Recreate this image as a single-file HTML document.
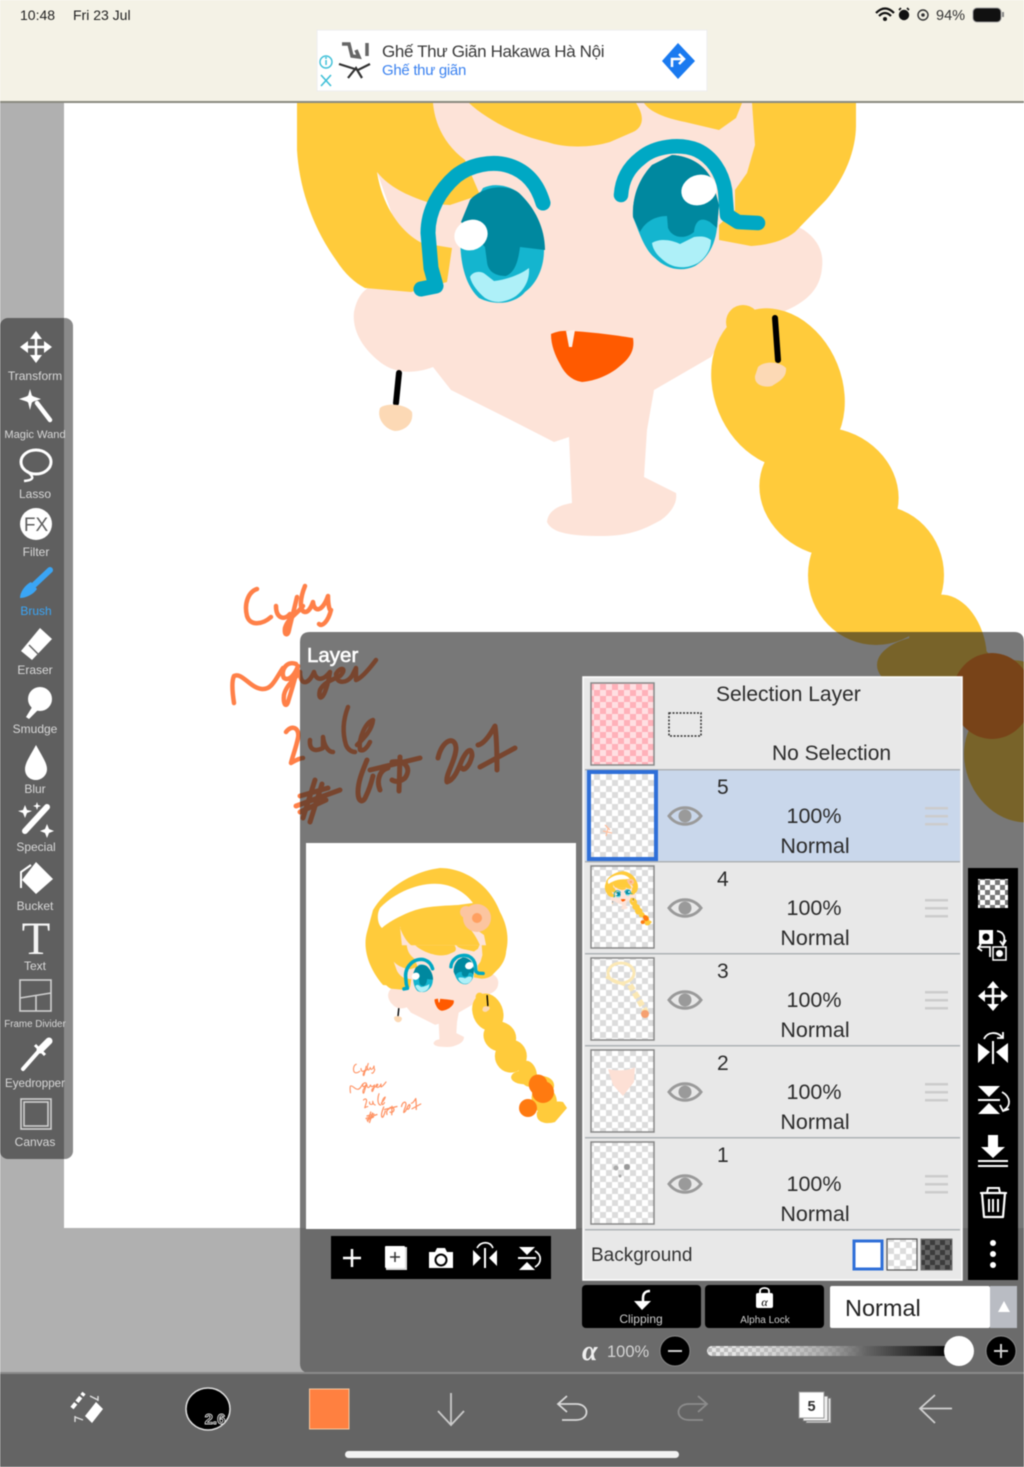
<!DOCTYPE html>
<html><head><meta charset="utf-8"><style>
html,body{margin:0;padding:0;background:#fff;width:1024px;height:1467px;overflow:hidden}
svg{display:block;filter:blur(.5px)}
text{font-family:"Liberation Sans","Noto Sans CJK SC",sans-serif}
.tl{font-size:12px;fill:#d8d8d8;text-anchor:middle}
.ln{font-size:21px;fill:#2c2c2c}
.lc{font-size:21.5px;fill:#2c2c2c;text-anchor:middle}
</style></head><body>
<svg width="1024" height="1467" viewBox="0 0 1024 1467" xmlns="http://www.w3.org/2000/svg">
<defs>
<pattern id="ck" width="12" height="12" patternUnits="userSpaceOnUse"><rect width="12" height="12" fill="#fff"/><rect width="6" height="6" fill="#dcdcdc"/><rect x="6" y="6" width="6" height="6" fill="#dcdcdc"/></pattern>
<pattern id="ckp" width="12" height="12" patternUnits="userSpaceOnUse"><rect width="12" height="12" fill="#ffdfe2"/><rect width="6" height="6" fill="#ffb1b9"/><rect x="6" y="6" width="6" height="6" fill="#ffb1b9"/></pattern>
<pattern id="ckd" width="10" height="10" patternUnits="userSpaceOnUse"><rect width="10" height="10" fill="#666"/><rect width="5" height="5" fill="#3c3c3c"/><rect x="5" y="5" width="5" height="5" fill="#3c3c3c"/></pattern>
<pattern id="ckw" width="10" height="10" patternUnits="userSpaceOnUse"><rect width="10" height="10" fill="#777"/><rect width="5" height="5" fill="#fff"/><rect x="5" y="5" width="5" height="5" fill="#fff"/></pattern>
<pattern id="cks" width="8" height="8" patternUnits="userSpaceOnUse"><rect width="8" height="8" fill="#e8e8e8"/><rect width="4" height="4" fill="#b8b8b8"/><rect x="4" y="4" width="4" height="4" fill="#b8b8b8"/></pattern>
<linearGradient id="sl" x1="0" x2="1"><stop offset="0" stop-color="#e8e8e8"/><stop offset=".45" stop-color="#9a9a9a"/><stop offset=".95" stop-color="#0a0a0a"/></linearGradient>
<linearGradient id="slf" x1="0" x2="1"><stop offset="0" stop-color="#fff" stop-opacity="1"/><stop offset="1" stop-color="#fff" stop-opacity="0"/></linearGradient>
<mask id="slm"><rect x="707" y="1340" width="160" height="22" fill="url(#slf)"/></mask>
<clipPath id="cv"><rect x="64" y="103" width="960" height="1125"/></clipPath>

<g id="face">
  <path fill="#fde3d8" d="M377,172 L408,193 L470,200 L460,255 L422,250 L394,220 Z"/>
  <path fill="#fde3d8" d="M433,103 L752,103 L756,145 L748,200 L804,230 C818,240 824,252 822,268 C820,290 806,305 769,317 L727,333 L711,357 L654,390 L647,430 L644,477 L676,493 C678,505 668,515 661,520 C640,532 625,536 600,536 C575,536 552,534 547,522 C548,510 560,505 572,503 L569,437 L554,442 L511,420 L451,390 L433,367 C415,374 395,374 380,362 C362,348 352,330 354,312 C357,298 362,292 368,288 Z"/>
  <path fill="#ffcb3b" d="M297,103 L297,150 C299,185 311,225 336,260 C345,274 355,283 365,288 L411,292 L447,282 L452,248 L422,243 C400,232 382,205 377,172 C390,188 408,196 433,204 L450,205 L480,195 L465,160 C445,145 435,125 433,103 Z"/>
  <path fill="#ffcb3b" d="M469,103 C485,118 515,135 547,142 C565,148 590,148 610,142 L633,132 C642,128 646,118 636,103 Z"/>
  <path fill="#ffcb3b" d="M644,103 C650,112 665,118 685,122 L719,130 L736,118 L742,103 Z"/>
  <path fill="#ffcb3b" d="M752,103 L755,145 L747,173 L735,190 L735,210 L719,225 L719,240 L751,246 C770,245 785,240 795,232 L826,200 C845,178 856,150 856,125 L856,103 Z"/>
  <path fill="#14b5cf" d="M461,225 L483,188 C495,182 510,186 519,193 C535,208 545,228 544,250 C544,270 535,285 525,292 C515,304 495,306 479,298 C465,285 458,260 461,225 Z"/>
  <path fill="#00889f" d="M461,222 L470,200 C480,188 505,182 519,193 C535,208 545,228 545,250 L520,247 C518,262 515,272 506,276 C496,276 488,272 487,262 L485,247 Z"/>
  <path fill="#aef0f8" d="M470,277 C472,272 480,270 485,274 L494,281 C505,280 520,275 529,268 C530,280 524,290 516,296 C505,303 495,304 485,298 C478,292 472,285 470,277 Z"/>
  <path fill="none" stroke="#00a8c4" stroke-width="15" stroke-linecap="round" stroke-linejoin="round" d="M421,289 L436,286 L431,268 L428,233 C428,210 440,190 456,176 C470,165 492,160 510,166 C528,172 538,186 543,203"/>
  <ellipse cx="471" cy="235" rx="17" ry="15" transform="rotate(-25 471 235)" fill="#fff"/>
  <path fill="#14b5cf" d="M633,217 C632,195 640,178 652,165 L672,155 C690,156 705,165 712,180 L719,205 L717,228 C715,245 708,258 695,266 C680,273 665,268 655,258 C645,250 640,235 633,217 Z"/>
  <path fill="#00889f" d="M633,217 C632,195 640,178 652,165 L672,155 C690,156 705,165 712,180 L719,205 L717,228 L710,222 C700,216 695,222 694,232 C685,240 672,238 668,228 L667,216 C655,216 645,222 640,232 Z"/>
  <path fill="#aef0f8" d="M652,243 C660,238 672,240 680,244 L694,237 C700,236 706,236 711,240 C711,250 705,258 698,263 C685,270 672,268 663,260 C657,255 653,250 652,243 Z"/>
  <path fill="none" stroke="#00a8c4" stroke-width="14.5" stroke-linecap="round" stroke-linejoin="round" d="M621,195 C622,180 628,168 641,158 C655,146 680,143 697,150 C712,157 722,172 725,190 L727,215 L738,222 L758,223"/>
  <ellipse cx="699" cy="190" rx="18" ry="15" transform="rotate(-20 699 190)" fill="#fff"/>
  <path fill="#ff5a00" d="M551,334 C560,330 566,331 572,331 C590,332 615,335 633,338 C635,350 630,358 620,366 C610,375 595,381 582,382 C570,380 564,372 560,364 C555,355 551,345 551,334 Z"/>
  <path fill="#fdf0ea" d="M566,331 L575,330 L572,347 L569,347 Z"/>
  <path stroke="#000" stroke-width="6" stroke-linecap="round" fill="none" d="M399,373 L396,403"/>
  <path fill="#fcd9b5" d="M380,408 C385,403 405,403 412,412 C414,425 403,431 395,431 C387,430 376,420 380,408 Z"/>
</g>
<g id="braid">
  <circle cx="743" cy="322" r="17" fill="#ffcb3b"/>
  <ellipse cx="778" cy="388" rx="64" ry="82" transform="rotate(-22 778 388)" fill="#ffcb3b"/>
  <ellipse cx="829" cy="492" rx="71" ry="63" transform="rotate(25 829 492)" fill="#ffcb3b"/>
  <ellipse cx="876" cy="575" rx="68" ry="70" fill="#ffcb3b"/>
  <ellipse cx="948" cy="650" rx="38" ry="56" transform="rotate(-12 948 650)" fill="#ffcb3b"/>
  <ellipse cx="935" cy="665" rx="58" ry="30" fill="#ffcb3b"/>
  <ellipse cx="1018" cy="762" rx="52" ry="62" transform="rotate(-25 1018 762)" fill="#ffcb3b"/>
  <ellipse cx="1010" cy="700" rx="50" ry="40" fill="#ffcb3b"/>
  <ellipse cx="992" cy="696" rx="40" ry="43" fill="#ff7a10"/>
  <path stroke="#000" stroke-width="6" stroke-linecap="round" fill="none" d="M775,318 L778,360"/>
  <path fill="#fcd9b5" d="M758,367 C762,362 778,360 786,368 C787,378 778,382 772,386 C764,388 754,385 755,376 Z"/>
</g>
<g id="writing" fill="none" stroke="#ff8048" stroke-width="4.5" stroke-linecap="round" stroke-linejoin="round">
  <path d="M257,589 C248,592 244,604 247,616 C250,626 262,625 271,617"/>
  <path d="M276,606 C276,618 284,621 290,614 M297,597 C294,610 290,625 289,630 C288,636 284,636 285,628 C288,618 297,614 303,606"/>
  <path d="M305,586 C300,598 299,611 305,612 C308,612 311,608 313,602 C314,612 322,613 328,596 C328,606 330,612 331,610 C328,622 322,627 319,624"/>
  <path d="M234,703 C232,690 232,680 234,676 C242,672 250,688 262,689 C272,690 276,678 283,668"/>
  <path d="M296,664 C286,660 280,672 284,678 C290,682 296,672 298,666 C295,680 290,695 288,702 C286,708 283,704 284,695 C286,685 296,678 300,672"/>
  <path d="M300,672 C300,685 308,686 314,672 C316,680 322,682 330,672 C329,680 326,690 324,694 C321,700 318,698 320,690 C324,682 332,680 340,676 C348,668 340,666 336,674 C336,684 346,684 352,676 L356,668 L356,680 C362,678 370,668 376,660"/>
  <path d="M286,732 C292,724 300,728 298,738 C296,748 292,758 291,763 C296,760 300,758 303,758"/>
  <path d="M310,740 C309,750 315,752 323,748 C323,742 323,738 323,737 C324,745 328,752 333,752"/>
  <path d="M348,707 C343,720 342,732 346,745 C348,750 352,752 355,752 M357,745 C364,738 372,730 373,720 C366,722 358,738 360,750 C364,752 368,746 370,742"/>
  <g stroke="#ff8048" stroke-width="5">
  <path d="M315,780 L303,818 M322,784 L310,822 M296,806 L340,790 M300,796 L328,788 M300,812 L326,800"/>
  <path d="M367,760 C362,772 358,782 358,792 C358,802 363,804 366,796 C370,788 372,780 373,776 M388,768 C380,770 376,780 380,790 M400,757 L399,791 M392,762 C405,760 412,768 405,778 C400,782 395,782 392,780 M370,770 L420,758"/>
  <path d="M438,758 C442,740 455,735 456,748 C456,760 445,775 447,782 C454,780 458,770 462,760 C468,748 472,748 472,756 C470,765 464,772 462,768 M478,745 C484,744 490,735 495,726 C497,740 497,755 497,770 M480,767 L515,748"/>
  </g>
</g>
<g id="thumbArt">
  <path fill="#ffcb3b" d="M373,910 C385,890 410,872 440,868 C465,868 490,885 500,912 C510,930 510,950 500,965 L487,980 L440,990 L383,985 C370,970 362,950 367,932 Z"/>
  <path fill="#fff" d="M380,908 C395,892 420,882 440,884 C452,885 465,892 473,903 L458,905 C440,906 425,906 410,912 C395,918 385,925 382,928 C378,925 376,915 380,908 Z"/>
  <path fill="#fde3d8" d="M400,927 L405,975 L490,965 L484,935 L470,925 Z"/>
  <path fill="#ffcb3b" d="M400,928 C410,912 440,908 460,920 C472,928 478,940 481,948 C465,958 440,956 425,952 C410,948 405,940 400,928 Z"/>
  <use href="#face" transform="translate(305 921) scale(.235)"/>
  <use href="#braid" transform="translate(305 921) scale(.235)"/>
  <circle cx="543" cy="1092" r="11" fill="#ff7a10"/><circle cx="528" cy="1108" r="9" fill="#ff7a10"/>
  <path fill="#ffcb3b" d="M537,1112 C545,1104 555,1100 563,1102 L567,1108 L555,1122 C545,1125 535,1122 537,1112 Z"/>
  <circle cx="477" cy="918" r="14" fill="#fcc5a0"/><circle cx="466" cy="912" r="6" fill="#fcc5a0"/><circle cx="477" cy="918" r="5" fill="#ffa060"/>
</g>
<g id="eye"><path d="M-16,0 C-8,-11 8,-11 16,0 C8,11 -8,11 -16,0 Z" fill="none" stroke="#9a9a9a" stroke-width="3"/><circle r="6.5" fill="#9a9a9a"/></g>
<g id="hnd" fill="#ccc"><rect x="-12" y="-9" width="23" height="2.5"/><rect x="-12" y="-1" width="23" height="2.5"/><rect x="-12" y="7" width="23" height="2.5"/></g>
</defs>

<rect width="1024" height="1467" fill="#b0b0b0"/>
<rect width="1024" height="102" fill="#f4f2e6"/>
<rect x="64" y="103" width="960" height="1125" fill="#fff"/>
<g clip-path="url(#cv)">
  <use href="#face"/><use href="#braid"/><use href="#writing"/>
</g>
<rect y="101" width="1024" height="2" fill="#8a8a80"/>

<text x="20" y="20" font-size="14" fill="#222">10:48</text><text x="73" y="20" font-size="14" fill="#222">Fri 23 Jul</text>
<path d="M876,13 C882,7 888,7 894,13 M879,16 C883,12 887,12 891,16" stroke="#111" stroke-width="2.2" fill="none"/><circle cx="885" cy="19" r="2" fill="#111"/>
<circle cx="904" cy="15" r="5.2" fill="#111"/><path d="M899,10 L901,8 M909,10 L907,8" stroke="#111" stroke-width="1.6"/>
<circle cx="923" cy="15" r="5" fill="none" stroke="#333" stroke-width="1.4"/><circle cx="923" cy="15" r="1.8" fill="#333"/>
<text x="936" y="20" font-size="14.5" fill="#333">94%</text>
<rect x="973" y="8" width="28" height="14" rx="4" fill="#111" stroke="#999"/><rect x="1002" y="12" width="2" height="5" fill="#888"/>

<rect x="317" y="30" width="390" height="61" fill="#fff" stroke="#eee"/>
<circle cx="326" cy="62" r="6" fill="none" stroke="#3fc0d8" stroke-width="1.4"/><rect x="325.3" y="60" width="1.5" height="5" fill="#3fc0d8"/><circle cx="326" cy="58" r="1" fill="#3fc0d8"/>
<path d="M321,75 L331,86 M331,75 L321,86" stroke="#3fc0d8" stroke-width="1.6"/>
<path d="M342,44 L349,44 L352,56 L359,57 L356,50 M367,43 L367,56" stroke="#666" stroke-width="3.5" fill="none"/>
<path d="M339,64 L358,70 L370,64 M348,78 L356,68 L362,78" stroke="#333" stroke-width="2.2" fill="none"/>
<text x="382" y="57" font-size="17" letter-spacing="-.35" fill="#3a3a3a">Ghế Thư Giãn Hakawa Hà Nội</text>
<text x="382" y="75" font-size="15" letter-spacing="-.3" fill="#3b82f0">Ghế thư giãn</text>
<path d="M678,43 L695,61 L678,79 L662,61 Z" fill="#1a7af0"/>
<path d="M672,67 L672,59 L683,59 M679,54 L684,59 L679,64" stroke="#fff" stroke-width="2.5" fill="none"/>

<rect x="0" y="318" width="73" height="841" rx="8" fill="#000" fill-opacity=".46"/>
<g fill="#fff" stroke="#fff">
  <path d="M36,333 L36,361 M22,347 L50,347" stroke-width="2.5" fill="none"/>
  <path d="M36,331 L42,339 L30,339 Z M36,363 L42,355 L30,355 Z M20,347 L28,341 L28,353 Z M52,347 L44,341 L44,353 Z" stroke="none"/>
  <path d="M37,403 L50,420" stroke-width="4.5" stroke-linecap="round"/>
  <path d="M30,389 L32,396 L41,399 L32,402 L30,410 L28,402 L19,399 L28,396 Z" stroke="none"/><circle cx="30" cy="399" r="4" stroke="none"/>
  <ellipse cx="36" cy="462" rx="15" ry="12" fill="none" stroke-width="3"/>
  <path d="M27,471 C33,476 36,480 24,481" fill="none" stroke-width="2.5"/>
  <circle cx="36" cy="524" r="16" stroke="none"/>
  <path d="M21,651 L40,628 L52,639 L32,660 Z" stroke="none"/>
  <ellipse cx="40" cy="699" rx="12" ry="12" stroke="none"/>
  <path d="M34,704 L26,717 L29,719 L40,708 Z" stroke="none"/>
  <path d="M36,745 C42,756 47,763 47,769 C47,776 41,780 36,780 C30,780 25,776 25,769 C25,763 30,756 36,745 Z" stroke="none"/>
  <path d="M25,831 L47,807" stroke-width="6" stroke-linecap="round"/>
  <path d="M25,805 L27,810 L32,811 L27,813 L25,818 L23,813 L18,811 L23,810 Z M37,802 L38,805 L41,806 L38,807 L37,810 L36,807 L33,806 L36,805 Z M47,824 L49,829 L54,831 L49,833 L47,838 L45,833 L40,831 L45,829 Z" stroke="none"/>
  <path d="M36,862 L53,879 L36,894 L22,880 Z" stroke="none"/>
  <path d="M31,865 L21,872 L21,888" fill="none" stroke-width="2"/>
  <path d="M23,1069 L38,1052" stroke-width="4" stroke-linecap="round"/>
  <path d="M40,1050 L49,1041" stroke-width="7" stroke-linecap="round"/>
  <path d="M35,1045 L45,1055" stroke-width="3"/>
  <g fill="none" stroke="#cfcfcf" stroke-width="1.6">
    <rect x="20" y="980" width="31" height="31"/><path d="M20,998 L51,993 M36,996 L36,1011"/>
    <rect x="21" y="1099" width="30" height="30"/><rect x="24" y="1102" width="24" height="24"/>
  </g>
</g>
<path d="M33,586 L50,570" stroke="#3aa5f5" stroke-width="6" stroke-linecap="round"/>
<path d="M31,582 L37,589 C33,595 25,598 20,598 C20,592 25,585 31,582 Z" fill="#3aa5f5"/>
<path d="M29,645 L39,655" stroke="#666" stroke-width="1.5"/>
<text x="36" y="531" font-size="19" text-anchor="middle" fill="#5f5f5f">FX</text>
<text x="36" y="954" font-size="47" text-anchor="middle" fill="#f4f4f4" style='font-family:"Liberation Serif",serif'>T</text>
<text class="tl" x="35" y="380">Transform</text>
<text class="tl" x="35" y="438" style="font-size:11.1px">Magic Wand</text>
<text class="tl" x="35" y="498">Lasso</text>
<text class="tl" x="36" y="556">Filter</text>
<text class="tl" x="36" y="615" style="fill:#3aa5f5">Brush</text>
<text class="tl" x="35" y="674">Eraser</text>
<text class="tl" x="35" y="733">Smudge</text>
<text class="tl" x="35" y="793">Blur</text>
<text class="tl" x="36" y="851">Special</text>
<text class="tl" x="35" y="910">Bucket</text>
<text class="tl" x="35" y="970">Text</text>
<text class="tl" x="35" y="1027" style="font-size:9.8px">Frame Divider</text>
<text class="tl" x="35" y="1087" style="font-size:11.6px">Eyedropper</text>
<text class="tl" x="35" y="1146">Canvas</text>

<path d="M300,642 Q300,632 310,632 L1014,632 Q1024,632 1024,642 L1024,1228 L300,1228 Z" fill="#1e1e1e" fill-opacity=".6"/>
<path d="M300,1228 L300,1363 Q300,1373 310,1373 L1024,1373 L1024,1228 Z" fill="#6b6b6b"/>
<text x="307" y="662" font-size="20.5" fill="#fff" stroke="#fff" stroke-width=".6">Layer</text>

<rect x="306" y="843" width="270" height="386" fill="#fff"/>
<use href="#thumbArt"/>
<use href="#writing" transform="translate(292 917) scale(.25)" opacity=".85"/>

<rect x="331" y="1236" width="220" height="43" fill="#000"/>
<g fill="#fff" stroke="#fff">
  <path d="M352,1249 L352,1267 M343,1258 L361,1258" stroke-width="2.5"/>
  <rect x="386" y="1247" width="21" height="23" fill="#ddd" stroke="none"/><rect x="385" y="1246" width="20" height="22" rx="1" stroke="none"/>
  <path d="M395,1252 L395,1262 M390,1257 L400,1257" stroke="#333" stroke-width="1.5"/>
  <path d="M429,1252 L435,1252 L437,1248 L445,1248 L447,1252 L453,1252 L453,1268 L429,1268 Z" stroke="none"/>
  <circle cx="441" cy="1260" r="5.5" fill="none" stroke="#000" stroke-width="2"/>
  <path d="M473,1250 L481,1258 L473,1266 Z M497,1250 L489,1258 L497,1266 Z" stroke="none"/><path d="M485,1248 L485,1268" stroke-width="2"/>
  <path d="M477,1248 C481,1241 490,1241 493,1248" fill="none" stroke-width="1.7"/>
  <path d="M519,1247 L535,1247 L527,1255 Z M519,1270 L535,1270 L527,1262 Z" stroke="none"/><path d="M518,1258 L536,1258" stroke-width="2"/>
  <path d="M535,1251 C542,1255 542,1263 535,1267" fill="none" stroke-width="1.7"/>
</g>

<rect x="583" y="677" width="379" height="603" fill="#e8e8e8" stroke="#fff" stroke-width="1.5"/>
<rect x="585" y="770" width="375" height="91" fill="#c9d7eb"/>
<g fill="#aeb2b5">
  <rect x="585" y="769" width="375" height="1.5"/><rect x="585" y="861" width="375" height="1.5"/><rect x="585" y="953" width="375" height="1.5"/><rect x="585" y="1045" width="375" height="1.5"/><rect x="585" y="1137" width="375" height="1.5"/><rect x="585" y="1229" width="375" height="1.5"/>
</g>
<rect x="591" y="683" width="63" height="82" fill="url(#ckp)" stroke="#888" stroke-width="1.5"/>
<rect x="669" y="713" width="32" height="23" fill="none" stroke="#333" stroke-width="1.5" stroke-dasharray="2 1.5"/>
<text class="ln" x="716" y="701">Selection Layer</text>
<text class="ln" x="772" y="760">No Selection</text>

<rect x="589" y="772" width="67" height="87" fill="url(#ck)" stroke="#2f6fd8" stroke-width="4"/>
<path d="M605,825 L610,830 M603,831 L612,833 M608,828 L606,836" stroke="#ffc0a0" stroke-width="1.3"/>
<rect x="591" y="866" width="63" height="82" fill="url(#ck)" stroke="#888" stroke-width="1.5"/>
<use href="#thumbArt" transform="translate(591 866) scale(.233 .212) translate(-306 -843)"/>
<rect x="591" y="958" width="63" height="82" fill="url(#ck)" stroke="#888" stroke-width="1.5"/>
<g fill="none" stroke="#fbe8b5" stroke-width="3">
<ellipse cx="621" cy="973" rx="13" ry="10"/><path d="M606,977 L625,985"/><path d="M630,985 L646,1012" stroke-width="6" stroke-dasharray="6 3"/></g>
<circle cx="645" cy="1014" r="4" fill="#f5a070"/>
<rect x="591" y="1050" width="63" height="82" fill="url(#ck)" stroke="#888" stroke-width="1.5"/>
<path d="M608,1069 C615,1071 630,1071 635,1067 L634,1082 L623,1096 L613,1085 Z" fill="#fde0d5"/>
<rect x="591" y="1142" width="63" height="82" fill="url(#ck)" stroke="#888" stroke-width="1.5"/>
<circle cx="616" cy="1168" r="2.5" fill="#aaa"/><circle cx="627" cy="1167" r="3" fill="#999"/><circle cx="620" cy="1176" r="1.5" fill="#aaa"/>

<use href="#eye" x="685" y="816"/><use href="#eye" x="685" y="908"/><use href="#eye" x="685" y="1000"/><use href="#eye" x="685" y="1092"/><use href="#eye" x="685" y="1184"/>
<use href="#hnd" x="937" y="816"/><use href="#hnd" x="937" y="908"/><use href="#hnd" x="937" y="1000"/><use href="#hnd" x="937" y="1092"/><use href="#hnd" x="937" y="1184"/>

<text class="ln" x="717" y="794">5</text><text class="lc" x="814" y="823">100%</text><text class="lc" x="815" y="853">Normal</text>
<text class="ln" x="717" y="886">4</text><text class="lc" x="814" y="915">100%</text><text class="lc" x="815" y="945">Normal</text>
<text class="ln" x="717" y="978">3</text><text class="lc" x="814" y="1007">100%</text><text class="lc" x="815" y="1037">Normal</text>
<text class="ln" x="717" y="1070">2</text><text class="lc" x="814" y="1099">100%</text><text class="lc" x="815" y="1129">Normal</text>
<text class="ln" x="717" y="1162">1</text><text class="lc" x="814" y="1191">100%</text><text class="lc" x="815" y="1221">Normal</text>

<text x="591" y="1261" font-size="19" fill="#333">Background</text>
<rect x="854" y="1241" width="28" height="28" fill="#fff" stroke="#2f6fd8" stroke-width="3"/>
<rect x="887" y="1239" width="30" height="31" fill="url(#ck)" stroke="#555" stroke-width="1.2"/>
<rect x="921" y="1239" width="31" height="31" fill="url(#ckd)" stroke="#777" stroke-width="1"/>

<rect x="968" y="868" width="50" height="412" fill="#000"/>
<g fill="#fff" stroke="#fff">
  <rect x="978" y="879" width="30" height="29" fill="url(#ckw)" stroke="none"/>
  <rect x="979" y="930" width="14" height="14" stroke="none"/><circle cx="986" cy="937" r="3.5" fill="#000" stroke="none"/>
  <rect x="993" y="947" width="13" height="13" fill="none" stroke-width="1.5"/><circle cx="999.500" cy="953.500" r="3.5" stroke="none"/>
  <path d="M997,931 C1004,932 1006,938 1003,943 M1000,941 L1003,945 L1006,940 M979,947 L990,947 C990,952 990,954 990,957 M981,944 L978,948 L982,951" fill="none" stroke-width="1.8"/>
  <path d="M993,983 L993,1009 M980,996 L1006,996" stroke-width="2.5" fill="none"/>
  <path d="M993,981 L999,988 L987,988 Z M993,1011 L999,1004 L987,1004 Z M978,996 L985,990 L985,1002 Z M1008,996 L1001,990 L1001,1002 Z" stroke="none"/>
  <path d="M978,1043 L990,1052 L978,1063 Z M1008,1043 L996,1052 L1008,1063 Z" stroke="none"/><path d="M993,1041 L993,1064" stroke-width="2"/>
  <path d="M984,1039 C987,1032 997,1031 1002,1037 M1003,1032 L1003,1038 L997,1038" fill="none" stroke-width="1.8"/>
  <path d="M978,1086 L1000,1086 L989,1097 Z M978,1114 L1000,1114 L989,1103 Z" stroke="none"/><path d="M978,1100 L1000,1100" stroke-width="2"/>
  <path d="M1002,1092 C1011,1097 1011,1106 1004,1110 M1000,1105 L1003,1111 L1009,1109" fill="none" stroke-width="1.8"/>
  <path d="M988,1135 L998,1135 L998,1147 L1005,1147 L993,1158 L981,1147 L988,1147 Z" stroke="none"/>
  <path d="M978,1161 L1008,1161 M978,1166 L1008,1166" stroke-width="2"/>
  <path d="M982,1193 L1005,1193 L1003,1217 L984,1217 Z" fill="none" stroke-width="2.2" stroke-linejoin="round"/>
  <path d="M980,1193 L1007,1193 M987,1193 L988,1188 L999,1188 L1000,1193 M989,1199 L989,1212 M993,1199 L993,1212 M998,1199 L998,1212" fill="none" stroke-width="2"/>
  <circle cx="993" cy="1243" r="3" stroke="none"/><circle cx="993" cy="1254" r="3" stroke="none"/><circle cx="993" cy="1265" r="3" stroke="none"/>
</g>

<rect x="582" y="1285" width="119" height="43" rx="4" fill="#000"/>
<rect x="705" y="1285" width="119" height="43" rx="4" fill="#000"/>
<path d="M650,1291 C645,1291 643,1294 643,1298 L643,1304" stroke="#fff" stroke-width="2.5" fill="none"/><path d="M634,1301 L651,1301 L642,1310 Z" fill="#fff"/>
<text x="641" y="1323" font-size="12" text-anchor="middle" fill="#ccc">Clipping</text>
<path d="M760,1294 L760,1291 C760,1287 769,1287 769,1291 L769,1294" stroke="#fff" stroke-width="1.8" fill="none"/><rect x="756" y="1293" width="17" height="15" rx="2" fill="#fff"/>
<text x="764.5" y="1306" font-size="12" text-anchor="middle" fill="#000" style='font-family:"Liberation Serif",serif' font-style="italic">α</text>
<text x="765" y="1323" font-size="10" text-anchor="middle" fill="#ccc">Alpha Lock</text>
<rect x="830" y="1286" width="160" height="42" rx="2" fill="#fff"/>
<rect x="990" y="1286" width="27" height="42" fill="#b9bcc3"/>
<path d="M1004,1301 L1010,1312 L998,1312 Z" fill="#fff"/>
<text x="845" y="1316" font-size="23.5" fill="#222">Normal</text>
<text x="582" y="1360" font-size="28" font-weight="700" font-style="italic" fill="#eee" style='font-family:"Liberation Serif",serif'>α</text>
<text x="607" y="1357" font-size="16.5" fill="#d4d4d4">100%</text>
<circle cx="675" cy="1351" r="15" fill="#000" stroke="#888"/><path d="M668,1351 L682,1351" stroke="#ccc" stroke-width="2"/>
<rect x="707" y="1346" width="250" height="10" rx="5" fill="url(#sl)"/>
<rect x="707" y="1346" width="160" height="10" rx="5" fill="url(#cks)" mask="url(#slm)"/>
<ellipse cx="959" cy="1351" rx="15" ry="15" fill="#fff"/>
<circle cx="1001" cy="1351" r="15" fill="#000" stroke="#888"/><path d="M994,1351 L1008,1351 M1001,1344 L1001,1358" stroke="#ccc" stroke-width="2"/>

<rect y="1373" width="1024" height="94" fill="#646464"/>
<rect y="1372" width="1024" height="2" fill="#8a8a8a"/>
<g fill="#fff" stroke="#fff">
  <path d="M72,1408 L84,1393" stroke-width="4" stroke-dasharray="6 2"/>
  <path d="M96,1402 L103,1409 L92,1423 L85,1416 Z" stroke="none"/>
  <path d="M90,1396 L98,1400 M98,1396 L98,1401 M83,1420 L75,1417 M75,1422 L75,1416" fill="none" stroke="#ddd" stroke-width="1.4"/>
</g>
<ellipse cx="208" cy="1409" rx="22" ry="21" fill="#000" stroke="#ddd" stroke-width="1.5"/>
<text x="215" y="1424" font-size="15" font-weight="700" text-anchor="middle" fill="#000" stroke="#ddd" stroke-width=".9">2.6</text>
<rect x="309.5" y="1389" width="39.5" height="40" fill="#ff8040" stroke="#f5c8a0"/>
<path d="M451,1393 L451,1425 M438,1411 L451,1425 L464,1411" fill="none" stroke="#c9c9c9" stroke-width="1.8"/>
<path d="M567,1396 L558,1404 L567,1412 M558,1404 L576,1404 C590,1404 590,1420 576,1420 L562,1420" fill="none" stroke="#d8d8d8" stroke-width="1.8"/>
<path d="M698,1396 L707,1404 L698,1412 M707,1404 L689,1404 C675,1404 675,1420 689,1420 L703,1420" fill="none" stroke="#8c8c8c" stroke-width="1.8"/>
<rect x="806" y="1398" width="25" height="25" fill="#ddd" stroke="#777"/><rect x="803" y="1396" width="25" height="25" fill="#eee" stroke="#777"/>
<rect x="799" y="1392" width="25" height="26" fill="#fff" stroke="#999"/>
<text x="811.5" y="1411" font-size="14.5" font-weight="700" text-anchor="middle" fill="#333">5</text>
<path d="M935,1395 L920,1408.5 L935,1423 M920,1408.5 L952,1408.5" fill="none" stroke="#d0d0d0" stroke-width="1.8"/>
<rect x="345" y="1451" width="334" height="7" rx="3.5" fill="#f2f2f2"/>
</svg>
</body></html>
